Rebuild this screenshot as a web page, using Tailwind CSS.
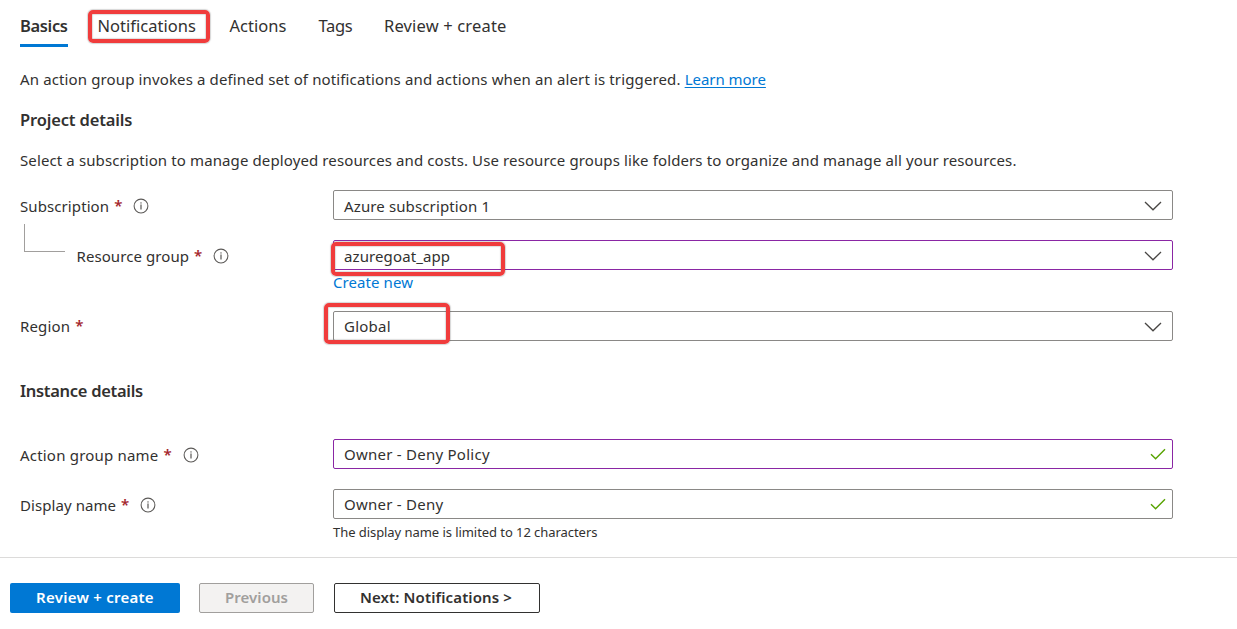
<!DOCTYPE html>
<html lang="en">
<head>
<meta charset="utf-8">
<title>Create an action group</title>
<script src="https://cdn.jsdelivr.net/npm/@tailwindcss/browser@4"></script>
</head>
<body class="h-[629px] overflow-hidden bg-white font-['Noto_Sans',sans-serif] text-[15px] leading-5 text-[#323130]">
<svg class="hidden">
  <symbol id="info" viewBox="0 0 16 16"><circle cx="8" cy="8" r="6.9" fill="none" stroke="#5c5a58" stroke-width="1.05"/><path d="M8 6.6V11.4" stroke="#484644" stroke-width="1.1"/><circle cx="8" cy="4.9" r=".7" fill="#484644"/></symbol>
  <symbol id="chevron" viewBox="0 0 18 10"><path d="M1 1l8 7.8L17 1" fill="none" stroke="#484644" stroke-width="1.3"/></symbol>
  <symbol id="check" viewBox="0 0 16 12"><path d="M1 6.2l4.6 4.5L15 1.2" fill="none" stroke="#57a300" stroke-width="1.4"/></symbol>
</svg>
<main class="flex h-[557px] flex-col pl-5">
  <nav class="flex h-[47px] gap-[31px] pt-3.5 text-[16.5px] leading-6">
    <div class="flex w-12 flex-col border-b-3 border-[#0078d4] font-semibold tracking-[-0.35px]"><span>Basics</span></div>
    <div class="relative -ml-[1.5px] w-[99px]"><span class="tracking-[0.03px]">Notifications</span>
      <div class="absolute -top-[4px] -left-[10px] h-[33px] w-[122px] rounded-[5px] border-4 border-[#f03c3c] shadow-[0_0_1px_1px_rgba(90,90,90,0.25),inset_0_0_1px_1px_rgba(90,90,90,0.2)]"></div>
    </div>
    <div class="ml-[2px] w-[58px] tracking-[0.04px]">Actions</div>
    <div class="w-[35px] tracking-[-0.3px]">Tags</div>
    <div class="-ml-[0.5px] tracking-[0.16px]">Review + create</div>
  </nav>
  <p class="mt-[22px] whitespace-nowrap tracking-[0.129px]">An action group invokes a defined set of notifications and actions when an alert is triggered. <a class="tracking-[-0.03px] text-[#0078d4] underline decoration-1 underline-offset-2">Learn more</a></p>
  <h2 class="mt-[21px] text-[16.5px] font-semibold tracking-[-0.16px]">Project details</h2>
  <p class="mt-5 whitespace-nowrap tracking-[0.115px]">Select a subscription to manage deployed resources and costs. Use resource groups like folders to organize and manage all your resources.</p>

  <div class="mt-5 flex h-[30px] items-center">
    <div class="flex w-[313px] items-center pt-0.5"><span class="tracking-[0.09px]">Subscription</span><span class="-mt-0.5 ml-[5px] font-semibold text-[#a4262c]">*</span><svg class="ml-[11px] size-4"><use href="#info"/></svg></div>
    <div class="flex h-[30px] w-[840px] items-center justify-between rounded-[2px] border border-[#8a8886] pr-2.5 pl-2.5"><span class="pt-0.5 tracking-[0.125px]">Azure subscription 1</span><svg class="mt-px h-2.5 w-[18px]"><use href="#chevron"/></svg></div>
  </div>

  <div class="mt-5 flex h-[51px]">
    <div class="flex w-[313px]">
      <div class="-mt-4 ml-1 h-7 w-[41px] border-b border-l border-[#a19f9d]"></div>
      <div class="ml-[11.5px] flex h-[30px] items-center pt-0.5"><span class="tracking-[0.08px]">Resource group</span><span class="-mt-0.5 ml-[5px] font-semibold text-[#a4262c]">*</span><svg class="ml-[11px] size-4"><use href="#info"/></svg></div>
    </div>
    <div class="relative w-[840px]">
      <div class="flex h-[30px] items-center justify-between rounded-[2px] border border-[#8a26a4] px-2.5"><span class="pt-0.5 tracking-[0.105px]">azuregoat_app</span><svg class="mt-px h-2.5 w-[18px]"><use href="#chevron"/></svg></div>
      <a class="block pt-[2px] tracking-[0.084px] text-[#0078d4]">Create new</a>
      <div class="absolute top-[2px] -left-[2px] h-[34px] w-[174px] rounded-[5px] border-4 border-[#f03c3c] shadow-[0_0_1px_1px_rgba(90,90,90,0.25),inset_0_0_1px_1px_rgba(90,90,90,0.2)]"></div>
    </div>
  </div>

  <div class="mt-5 flex h-[30px] items-center">
    <div class="flex w-[313px] items-center"><span class="tracking-[0.15px]">Region</span><span class="-mt-0.5 ml-[5px] font-semibold text-[#a4262c]">*</span></div>
    <div class="relative flex h-[30px] w-[840px] items-center justify-between rounded-[2px] border border-[#8a8886] px-2.5"><span class="tracking-[0.25px]">Global</span><svg class="mt-px h-2.5 w-[18px]"><use href="#chevron"/></svg>
      <div class="absolute -top-[9.5px] -left-[10px] h-[41px] w-[126px] rounded-[5px] border-4 border-[#f03c3c] shadow-[0_0_1px_1px_rgba(90,90,90,0.25),inset_0_0_1px_1px_rgba(90,90,90,0.2)]"></div>
    </div>
  </div>

  <h2 class="mt-10 text-[16.5px] font-semibold tracking-[-0.3px]">Instance details</h2>

  <div class="mt-[38px] flex h-[30px] items-center">
    <div class="flex w-[313px] items-center pt-px"><span class="tracking-[0.2px]">Action group name</span><span class="-mt-0.5 ml-[5px] font-semibold text-[#a4262c]">*</span><svg class="ml-[11.5px] size-4"><use href="#info"/></svg></div>
    <div class="flex h-[30px] w-[840px] items-center justify-between rounded-[2px] border border-[#8a26a4] pr-1.5 pl-2.5"><span class="tracking-[0.25px]">Owner - Deny Policy</span><svg class="h-3 w-4"><use href="#check"/></svg></div>
  </div>
  <div class="mt-5 flex h-[30px] items-center">
    <div class="flex w-[313px] items-center pt-px"><span class="tracking-[0.07px]">Display name</span><span class="-mt-0.5 ml-[5px] font-semibold text-[#a4262c]">*</span><svg class="ml-[11px] size-4"><use href="#info"/></svg></div>
    <div class="flex h-[30px] w-[840px] items-center justify-between rounded-[2px] border border-[#8a8886] pr-1.5 pl-2.5"><span class="tracking-[0.25px]">Owner - Deny</span><svg class="h-3 w-4"><use href="#check"/></svg></div>
  </div>
  <p class="mt-[3px] ml-[313px] text-[13px] tracking-[-0.06px]">The display name is limited to 12 characters</p>
</main>
<footer class="flex h-[72px] border-t border-[#dcdbda] pt-[25px] pl-2.5 font-semibold">
  <button class="h-[30px] w-[170px] rounded-[2px] bg-[#0078d4] pb-0.5 tracking-[0.25px] text-white">Review + create</button>
  <button class="ml-[19px] h-[30px] w-[115px] rounded-[2px] border border-[#a19f9d] bg-[#f3f2f1] pb-0.5 tracking-[0.06px] text-[#a19f9d]">Previous</button>
  <button class="ml-5 h-[30px] w-[206px] rounded-[2px] border border-[#323130] bg-white pr-0.5 pb-0.5 tracking-[0.12px]">Next: Notifications &gt;</button>
</footer>
</body>
</html>
